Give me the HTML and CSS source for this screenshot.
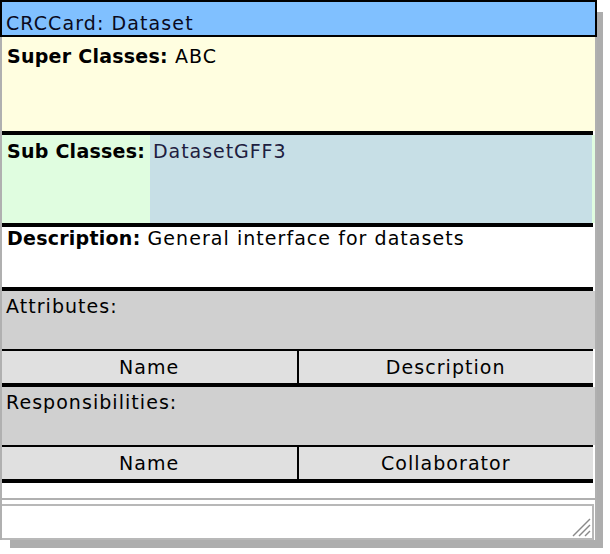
FILE: index.html
```html
<!DOCTYPE html>
<html>
<head>
<meta charset="utf-8">
<link rel="stylesheet" href="styles.css">
</head>
<body>
<div class="page">
<div class="frame">
  <div class="title">CRCCard: Dataset</div>
  <div class="card">
    <div class="super"><b>Super Classes:</b> ABC</div>
    <div class="rule"></div>
    <div class="sub">
      <div class="sub-label"><b>Sub Classes:</b></div>
      <div class="sub-value">DatasetGFF3</div>
    </div>
    <div class="rule"></div>
    <div class="desc"><b>Description:</b> General interface for datasets</div>
    <div class="rule"></div>
    <div class="group">Attributes:</div>
    <div class="thin"></div>
    <div class="thead"><div class="th">Name</div><div class="vdiv"></div><div class="th">Description</div></div>
    <div class="rule"></div>
    <div class="group">Responsibilities:</div>
    <div class="thin"></div>
    <div class="thead"><div class="th">Name</div><div class="vdiv"></div><div class="th">Collaborator</div></div>
    <div class="rule"></div>
    <div class="tail"></div>
  </div>
  <div class="notes">
    <svg class="grip" width="20" height="20" viewBox="0 0 20 20">
      <g stroke="#8a8a8a" stroke-width="1.4">
        <line x1="2" y1="19" x2="19" y2="2"/>
        <line x1="8" y1="19" x2="19" y2="8"/>
        <line x1="14" y1="19" x2="19" y2="14"/>
      </g>
      <g stroke="#ffffff" stroke-width="1">
        <line x1="4" y1="19" x2="19" y2="4"/>
        <line x1="10" y1="19" x2="19" y2="10"/>
        <line x1="16" y1="19" x2="19" y2="16"/>
      </g>
    </svg>
  </div>
</div>
</div>
</body>
</html>
```
FILE: styles.css
```css
html, body {
  margin: 0;
  padding: 0;
  background: #ffffff;
}
body {
  font-family: "DejaVu Sans", "Liberation Sans", sans-serif;
  font-size: 19px;
  line-height: 22px;
  letter-spacing: 1.05px;
  color: #000;
}
.page {
  width: 610px;
  height: 554px;
}
.frame {
  width: 593px;
  border-left: 2px solid #b0b0b0;
  border-right: 2px solid #b0b0b0;
  background: #fff;
  box-shadow: 8px 10px 0 -2px #adadad;
  display: flex;
  flex-direction: column;
}
.title {
  margin: 0 -2px;
  height: 23px;
  padding: 10px 4px 0;
  border: 2px solid #000;
  background: #80c0ff;
  color: #0a0a20;
  letter-spacing: 1.1px;
}
.card {
  display: flex;
  flex-direction: column;
  border-bottom: 2px solid #b0b0b0;
}
.card b { font-weight: bold; letter-spacing: 0.25px; }
.super {
  height: 86px;
  padding: 8px 5px 0;
  background: #fffee0;
}
.rule {
  height: 4px;
  background: #000;
  margin-right: 2px;
}
.thin {
  height: 2px;
  background: #000;
  margin-right: 2px;
}
.sub {
  height: 88px;
  display: flex;
  background: #e0fde0;
}
.sub-label {
  width: 143px;
  padding: 5px 0 0 5px;
}
.sub-value {
  flex: 1;
  margin-right: 3px;
  padding: 5px 0 0 3px;
  background: #c7dfe6;
  color: #1e2040;
  letter-spacing: 0.95px;
}
.desc {
  height: 60px;
  padding: 0 5px;
  background: #fff;
}
.group {
  height: 54px;
  padding: 4px 4px 0;
  background: #d0d0d0;
}
.thead {
  height: 32px;
  display: flex;
  align-items: center;
  background: #e0e0e0;
  margin-right: 2px;
}
.th {
  flex: 1;
  text-align: center;
}
.vdiv {
  width: 2px;
  align-self: stretch;
  background: #000;
}
.tail {
  height: 15px;
}
.notes {
  margin-top: 4px;
  margin-right: 1px;
  height: 32px;
  border-top: 2px solid #b8b8b8;
  border-bottom: 2px solid #b8b8b8;
  border-right: 2px solid #b8b8b8;
  display: flex;
  justify-content: flex-end;
  align-items: flex-end;
}
.grip {
  display: block;
  margin: 0 1px 1px 0;
}
```
